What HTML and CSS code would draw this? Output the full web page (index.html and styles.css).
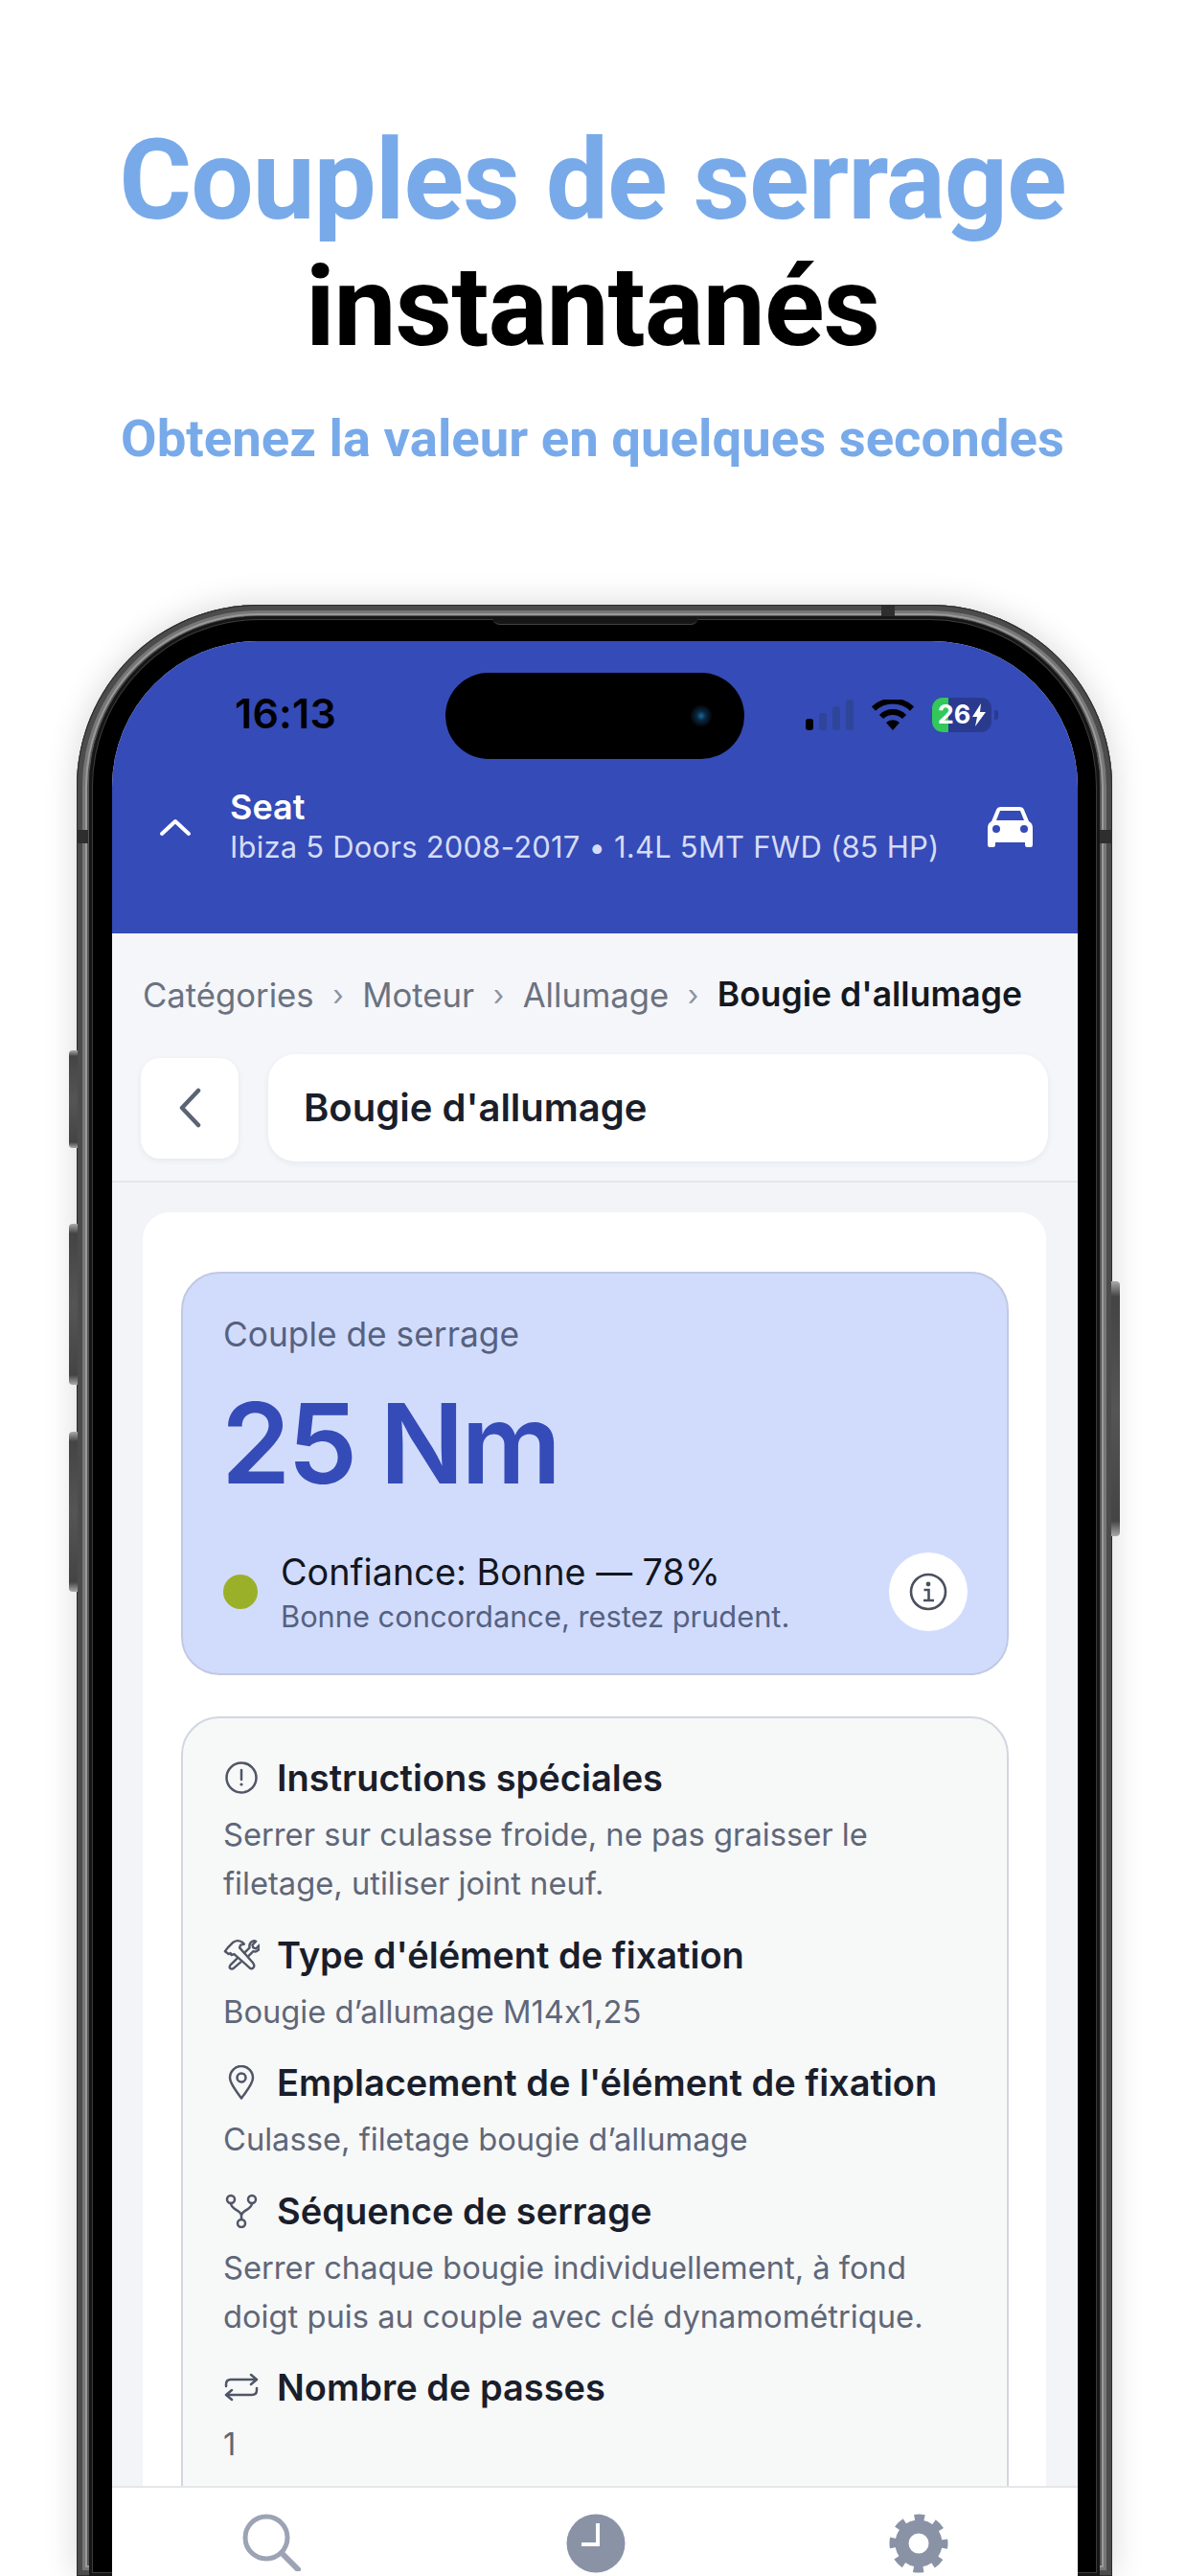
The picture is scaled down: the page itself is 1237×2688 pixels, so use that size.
FILE: index.html
```html
<!DOCTYPE html>
<html lang="fr">
<head>
  <meta charset="UTF-8" />
  <title>Couples de serrage instantanés</title>
  <link rel="stylesheet" href="styles.css">
</head>
<body>

  <header class="promo">
    <h1>Couples de serrage <span>instantanés</span></h1>
    <p>Obtenez la valeur en quelques secondes</p>
  </header>

  <div class="phone">
    <i class="btn btn-silent"></i>
    <i class="btn btn-up"></i>
    <i class="btn btn-down"></i>
    <i class="btn btn-power"></i>
    <i class="band band-left"></i>
    <i class="band band-right"></i>
    <i class="band band-top"></i>

    <div class="bezel">
      <i class="speaker"></i>
      <div class="screen">

        <div class="appbar">
          <div class="statusbar">
            <span class="time">16:13</span>
            <div class="island"><i class="camera"></i></div>
            <div class="status-icons">
              <div class="signal"><i class="on"></i><i></i><i></i><i></i></div>
              <svg class="wifi" viewBox="0 0 44 32" width="44" height="32">
                <path d="M22 32l-7-8a10 10 0 0 1 14 0z" fill="#000"/>
                <path d="M10 18a17 17 0 0 1 24 0M2 9.500a29 29 0 0 1 40 0" fill="none" stroke="#000" stroke-width="6"/>
              </svg>
              <div class="battery">
                <i class="charge"></i>
                <span>26</span>
                <svg viewBox="0 0 14 24" width="14" height="24"><path d="M9 0L0 14h5l-2 10 11-15H8z" fill="#fff"/></svg>
              </div>
              <i class="battery-nub"></i>
            </div>
          </div>

          <div class="vehicle">
            <svg class="chevron-up" viewBox="0 0 34 20" width="34" height="20">
              <path d="M3 17L17 4l14 13" fill="none" stroke="#fff" stroke-width="4" stroke-linecap="round" stroke-linejoin="round"/>
            </svg>
            <div class="vehicle-text">
              <div class="make">Seat</div>
              <div class="model">Ibiza 5 Doors 2008-2017 • 1.4L 5MT FWD (85 HP)</div>
            </div>
            <svg class="car" viewBox="0 0 47 42" width="47" height="42">
              <path fill="#fff" fill-rule="evenodd" d="M9 3q1-3 5-3h19q4 0 5 3l5 12q4 2 4 7v17q0 3-2 3h-4q-2 0-2-3v-2H8v2q0 3-2 3H2q-2 0-2-3V22q0-5 4-7zM13 4l-4 10h29L34 4zM9 19a4 4 0 1 0 0 8 4 4 0 0 0 0-8zM38 19a4 4 0 1 0 0 8 4 4 0 0 0 0-8z"/>
            </svg>
          </div>
        </div>

        <div class="topnav">
          <nav class="crumbs">
            <span>Catégories</span><i>›</i>
            <span>Moteur</span><i>›</i>
            <span>Allumage</span><i>›</i>
            <b>Bougie d'allumage</b>
          </nav>
          <div class="title-row">
            <button class="back">
              <svg viewBox="0 0 26 42" width="26" height="42">
                <path d="M22 3L5 21l17 18" fill="none" stroke="#5b6475" stroke-width="4.500" stroke-linecap="round" stroke-linejoin="round"/>
              </svg>
            </button>
            <div class="title-box">Bougie d'allumage</div>
          </div>
        </div>

        <main class="content">
          <div class="sheet">

            <section class="torque">
              <div class="torque-label">Couple de serrage</div>
              <div class="torque-value">25 Nm</div>
              <div class="confidence">
                <i class="dot"></i>
                <div class="confidence-text">
                  <div class="confidence-title">Confiance: Bonne — 78%</div>
                  <div class="confidence-note">Bonne concordance, restez prudent.</div>
                </div>
                <div class="info">
                  <svg viewBox="0 0 40 40" width="40" height="40">
                    <circle cx="20" cy="20" r="18" fill="none" stroke="#4a5060" stroke-width="2.600"/>
                    <circle cx="20" cy="12" r="2.400" fill="#4a5060"/>
                    <path d="M15.500 18H20.500V28M15 29h11" fill="none" stroke="#4a5060" stroke-width="2.600"/>
                  </svg>
                </div>
              </div>
            </section>

            <section class="details">
              <div class="item">
                <h3>
                  <span class="ico">
                    <svg viewBox="0 0 34 34" width="34" height="34">
                      <circle cx="17" cy="17" r="15.500" class="line"/>
                      <path d="M17 9v10" class="line"/>
                      <circle cx="17" cy="24" r="1.600" fill="#4f5666"/>
                    </svg>
                  </span>
                  Instructions spéciales
                </h3>
                <p>Serrer sur culasse froide, ne pas graisser le filetage, utiliser joint neuf.</p>
              </div>

              <div class="item">
                <h3>
                  <span class="ico">
                    <svg viewBox="0 0 40 34" width="40" height="34">
                      <path class="line" d="M5 9l6-6c3-2 7-2 10 0l2 2-4 1-1 3 15 17q2 3 0 5t-4 0L12 16l-3 1-1-2-2 1-4-3z"/>
                      <path class="line" d="M24 14l5-5q-1-5 3-7 2-1 4 0l-4 4 1 3 3 1 4-4q1 4-2 6-2 2-5 1l-5 5M15 21l-7 7q-2 3 0 4t4-1l7-6"/>
                    </svg>
                  </span>
                  Type d'élément de fixation
                </h3>
                <p>Bougie d’allumage M14x1,25</p>
              </div>

              <div class="item">
                <h3>
                  <span class="ico">
                    <svg viewBox="0 0 28 36" width="28" height="36">
                      <path class="line" d="M14 34.500C9 27 2 20 2 13a12 12 0 0 1 24 0c0 7-7 14-12 21.500z"/>
                      <circle cx="14" cy="13" r="4.500" class="line"/>
                    </svg>
                  </span>
                  Emplacement de l'élément de fixation
                </h3>
                <p>Culasse, filetage bougie d’allumage</p>
              </div>

              <div class="item">
                <h3>
                  <span class="ico">
                    <svg viewBox="0 0 34 36" width="34" height="36">
                      <circle cx="6" cy="6" r="4" class="line"/>
                      <circle cx="28" cy="6" r="4" class="line"/>
                      <circle cx="17" cy="31" r="4" class="line"/>
                      <path class="line" d="M6 10c0 7 11 7 11 13v4M28 10c0 7-11 7-11 13"/>
                    </svg>
                  </span>
                  Séquence de serrage
                </h3>
                <p>Serrer chaque bougie individuellement, à fond doigt puis au couple avec clé dynamométrique.</p>
              </div>

              <div class="item">
                <h3>
                  <span class="ico">
                    <svg viewBox="0 0 36 30" width="36" height="30">
                      <path class="line" d="M2 14v-2q0-5 5-5h27M28 2l6 5-6 5M34 16v2q0 5-5 5H2M8 18l-6 5 6 5"/>
                    </svg>
                  </span>
                  Nombre de passes
                </h3>
                <p>1</p>
              </div>
            </section>

          </div>
        </main>

        <footer class="tabbar">
          <svg viewBox="0 0 62 60" width="62" height="60">
            <circle cx="25" cy="25" r="22" fill="none" stroke="#9ca3b4" stroke-width="5"/>
            <path d="M41 41l17 17" stroke="#9ca3b4" stroke-width="6" stroke-linecap="round"/>
          </svg>
          <svg viewBox="0 0 62 62" width="62" height="62">
            <circle cx="31" cy="31" r="30.500" fill="#8a93a6"/>
            <path d="M33 10v22H16" fill="none" stroke="#fff" stroke-width="4"/>
          </svg>
          <svg viewBox="0 0 62 62" width="62" height="62">
            <circle cx="31" cy="31" r="25" fill="none" stroke="#8a93a6" stroke-width="11" stroke-dasharray="9.800 9.835" stroke-dashoffset="4.900"/>
            <circle cx="31" cy="31" r="17.500" fill="none" stroke="#8a93a6" stroke-width="14"/>
          </svg>
        </footer>

      </div>
    </div>
  </div>

</body>
</html>
```

FILE: styles.css
```css
* {
  box-sizing: border-box;
}

html,
body {
  margin: 0;
  height: 2688px;
  overflow: hidden;
  background: #fff;
}

body {
  font-family: 'Inter', 'Liberation Sans', sans-serif;
  font-feature-settings: 'calt' 0;
}

i {
  display: block;
  font-style: normal;
}

/* promo header */
.promo {
  padding-top: 122px;
  text-align: center;
  font-family: 'Roboto', sans-serif;
  font-weight: 700;
}

.promo h1 {
  margin: 0;
  font-size: 116px;
  line-height: 132px;
  font-weight: 700;
  letter-spacing: -1px;
  color: #78aaea;
}

.promo h1 span {
  display: block;
  color: #000;
}

.promo p {
  margin: 39px 0 0;
  font-size: 54.500px;
  line-height: 64px;
  color: #78aaea;
}

/* phone frame, cut off by the bottom of the page */
.phone {
  position: relative;
  width: 1081px;
  height: 2057px;
  margin: 142px 0 0 80px;
  padding: 12px 13px 0;
  border-radius: 190px 190px 0 0;
  background: #444;
  box-shadow: 0 0 34px rgba(0, 0, 0, 0.16),
    inset 0 0 0 1px #2b2b2b,
    inset 0 0 0 6px #4c4c4c,
    inset 0 0 0 9px #777,
    inset 0 0 0 11px #9a9a9a,
    inset 0 0 0 13px #555;
}

.btn {
  position: absolute;
  left: -8px;
  width: 9px;
  border-radius: 4px 0 0 4px;
  background: linear-gradient(#aaa 0, #444 6%, #555 50%, #444 94%, #aaa 100%);
}

.btn-silent {
  top: 465px;
  height: 102px;
}

.btn-up {
  top: 646px;
  height: 168px;
}

.btn-down {
  top: 863px;
  height: 167px;
}

.btn-power {
  left: auto;
  right: -8px;
  top: 706px;
  height: 266px;
  border-radius: 0 4px 4px 0;
}

.band {
  position: absolute;
  background: #2e2e2e;
}

.band-left {
  left: 0;
  top: 235px;
  width: 12px;
  height: 14px;
}

.band-right {
  right: 0;
  top: 235px;
  width: 13px;
  height: 14px;
}

.band-top {
  top: 0;
  left: 840px;
  width: 14px;
  height: 12px;
}

.bezel {
  position: relative;
  height: 100%;
  padding: 26px 24px 0;
  border-radius: 178px 178px 0 0;
  background: #000;
  box-shadow: inset 0 0 0 3px #161616, inset 0 0 0 4px #3c3c3c;
}

.speaker {
  position: absolute;
  top: 0;
  left: 421px;
  width: 215px;
  height: 9px;
  border-radius: 0 0 8px 8px;
  background: #161616;
  border-bottom: 1px solid #444;
}

.screen {
  display: flex;
  flex-direction: column;
  width: 1008px;
  height: 2019px;
  overflow: hidden;
  border-radius: 152px 152px 0 0;
  background: #f5f6fa;
}

/* blue app bar */
.appbar {
  height: 305px;
  flex-shrink: 0;
  background: #354bb7;
}

.statusbar {
  display: flex;
  align-items: center;
  height: 90px;
  margin-top: 33px;
  padding-left: 128px;
}

.time {
  width: 220px;
  margin-top: -6px;
  font-size: 43px;
  font-weight: 600;
  letter-spacing: 0.200px;
  color: #000;
}

.island {
  position: relative;
  width: 312px;
  height: 90px;
  border-radius: 45px;
  background: #000;
}

.camera {
  position: absolute;
  left: 256px;
  top: 34px;
  width: 22px;
  height: 22px;
  border-radius: 50%;
  background: radial-gradient(circle, #1b6b9c 0, #0a2a42 30%, #050a14 65%);
}

.status-icons {
  display: flex;
  align-items: center;
  margin-top: -3px;
  margin-left: 64px;
}

.signal {
  display: flex;
  align-items: flex-end;
  gap: 6px;
  height: 32px;
}

.signal i {
  width: 8px;
  border-radius: 3px;
  background: #2f4599;
}

.signal i:nth-child(1) {
  height: 12px;
  background: #000;
}

.signal i:nth-child(2) {
  height: 18px;
}

.signal i:nth-child(3) {
  height: 25px;
}

.signal i:nth-child(4) {
  height: 32px;
}

.wifi {
  margin-left: 19px;
}

.battery {
  position: relative;
  display: flex;
  align-items: center;
  justify-content: center;
  gap: 2px;
  width: 62px;
  height: 36px;
  margin-left: 19px;
  overflow: hidden;
  border-radius: 11px;
  background: #2a3b8f;
  color: #fff;
  font-size: 27px;
  font-weight: 700;
}

.battery span,
.battery svg {
  position: relative;
}

.charge {
  position: absolute;
  left: 0;
  top: 0;
  bottom: 0;
  width: 17px;
  background: #34c759;
}

.battery-nub {
  width: 4px;
  height: 10px;
  margin-left: 3px;
  border-radius: 0 3px 3px 0;
  background: #2a3b8f;
}

.vehicle {
  display: flex;
  align-items: center;
  margin-top: 30px;
  padding: 0 47px 0 49px;
}

.chevron-up {
  flex-shrink: 0;
}

.vehicle-text {
  flex: 1;
  margin-left: 40px;
}

.make {
  font-size: 36px;
  line-height: 41px;
  font-weight: 600;
  color: #fff;
}

.model {
  font-size: 31px;
  line-height: 41px;
  letter-spacing: 0.200px;
  color: #d5dcf6;
}

/* breadcrumb and title */
.topnav {
  flex-shrink: 0;
  padding: 44px 31px 20px 30px;
  border-bottom: 2px solid #e5e7ed;
}

.crumbs {
  display: flex;
  align-items: center;
  gap: 19.500px;
  padding-left: 2px;
  font-size: 34.700px;
  line-height: 40px;
  color: #6b7280;
  white-space: nowrap;
}

.crumbs i {
  font-size: 30px;
  color: #8b92a0;
}

.crumbs b {
  font-weight: 600;
  font-size: 35.500px;
  color: #14181f;
}

.title-row {
  display: flex;
  align-items: center;
  gap: 31px;
  margin-top: 42px;
}

.back {
  display: flex;
  align-items: center;
  justify-content: center;
  width: 102px;
  height: 105px;
  padding: 0;
  border: none;
  border-radius: 20px;
  background: #fff;
  box-shadow: 0 2px 6px rgba(30, 40, 70, 0.07);
}

.title-box {
  flex: 1;
  height: 112px;
  padding-left: 37px;
  border-radius: 28px;
  background: #fff;
  box-shadow: 0 2px 6px rgba(30, 40, 70, 0.07);
  font-size: 40px;
  line-height: 112px;
  font-weight: 600;
  color: #1a1e2b;
}

/* scroll area */
.content {
  flex: 1;
  min-height: 0;
  overflow: hidden;
  padding: 31px 33px 0 32px;
  background: #f3f4f8;
}

.sheet {
  height: 1400px;
  padding: 62px 39px 0 40px;
  border-radius: 28px;
  background: #fff;
}

.torque {
  height: 421px;
  padding: 44px 41px 0 42px;
  border: 2px solid #c0c9e3;
  border-radius: 40px;
  background: #d1dcfd;
}

.torque-label {
  font-size: 35.300px;
  line-height: 40px;
  color: #566180;
}

.torque-value {
  margin: 28px 0 0 -2px;
  font-size: 116px;
  line-height: 130px;
  font-weight: 600;
  letter-spacing: -3px;
  color: #354bb7;
}

.confidence {
  display: flex;
  align-items: center;
  margin-top: 46px;
}

.dot {
  width: 36px;
  height: 36px;
  margin-bottom: 6px;
  border-radius: 50%;
  background: #9bb029;
}

.confidence-text {
  flex: 1;
  margin-left: 24px;
}

.confidence-title {
  font-size: 37.800px;
  line-height: 46px;
  color: #12161f;
}

.confidence-note {
  font-size: 30.800px;
  line-height: 48px;
  color: #566180;
}

.info {
  display: flex;
  align-items: center;
  justify-content: center;
  width: 82px;
  height: 82px;
  margin-top: -6px;
  border-radius: 50%;
  background: #fff;
}

.details {
  margin-top: 43px;
  height: 1000px;
  padding: 37px 42px 0;
  border: 2px solid #d3d6e0;
  border-radius: 40px;
  background: #f7f8f8;
}

.item {
  margin-bottom: 23.500px;
}

.item h3 {
  display: flex;
  align-items: center;
  gap: 18px;
  margin: 0 0 9px;
  font-size: 38px;
  line-height: 50px;
  font-weight: 600;
  color: #1a1e2b;
}

.item p {
  margin: 0;
  font-size: 32.700px;
  line-height: 51px;
  color: #5f6778;
}

.ico {
  display: flex;
  align-items: center;
  justify-content: center;
  flex-shrink: 0;
  width: 38px;
}

.line {
  fill: none;
  stroke: #4f5666;
  stroke-width: 2.500;
  stroke-linecap: round;
  stroke-linejoin: round;
}

/* bottom tabs */
.tabbar {
  display: flex;
  flex-shrink: 0;
  justify-content: space-between;
  height: 94px;
  padding: 27px 135px 0 136px;
  border-top: 2px solid #e5e7eb;
  background: #fff;
}
```
